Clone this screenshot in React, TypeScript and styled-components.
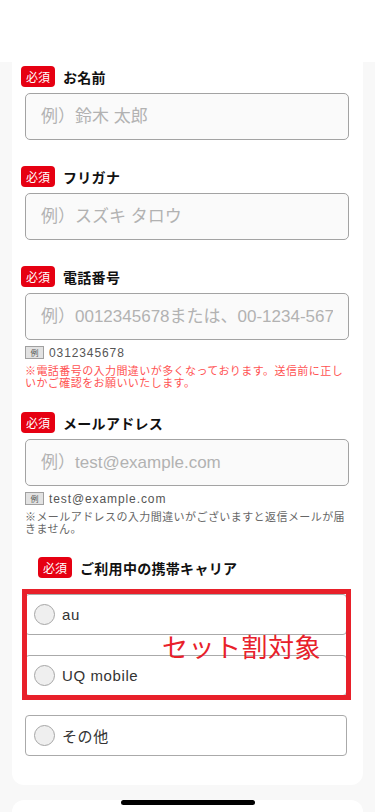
import React from 'react';
import styled, { createGlobalStyle } from 'styled-components';

const GlobalStyle = createGlobalStyle`
  html, body {
    margin: 0;
    padding: 0;
    background: #f8f8f8;
  }
  body {
    font-family: "Liberation Sans", "Noto Sans CJK JP", sans-serif;
    color: #111;
    -webkit-font-smoothing: antialiased;
  }
  * { box-sizing: border-box; }
`;

const Header = styled.div`
  height: 62px;
  background: #ffffff;
`;

const Body = styled.div`
  padding: 0 12px;
  display: flex;
  flex-direction: column;
  gap: 15px;
`;

const Card = styled.div`
  background: #ffffff;
  border-radius: 0 0 12px 12px;
  padding: 4px 14px 29px 13px;
  display: flex;
  flex-direction: column;
`;

const NextCard = styled.div`
  background: #ffffff;
  border-radius: 12px 12px 0 0;
  height: 60px;
`;

const Field = styled.div<{ $space?: number }>`
  display: flex;
  flex-direction: column;
  margin-top: ${(p) => p.$space ?? 0}px;
`;

const Head = styled.div<{ $indent?: number }>`
  display: flex;
  align-items: center;
  gap: 8px;
  height: 21px;
  margin-left: ${(p) => p.$indent ?? -4}px;
`;

const Required = styled.span`
  display: inline-block;
  height: 21px;
  padding: 0 5px;
  border-radius: 4px;
  background: #e60012;
  color: #ffffff;
  font-family: "Noto Sans CJK JP", sans-serif;
  font-size: 12px;
  line-height: 21px;
  font-weight: 400;
`;

const Label = styled.span`
  font-family: "Noto Sans CJK JP", sans-serif;
  font-size: 14px;
  font-weight: 700;
  letter-spacing: 0.3px;
  color: #111;
`;

const TextInput = styled.input`
  margin-top: 6px;
  width: 100%;
  height: 47px;
  padding: 0 15px;
  border: 1px solid #a3a3a3;
  border-radius: 5px;
  background: #fafafa;
  font-family: "Liberation Sans", "Noto Sans CJK JP", sans-serif;
  font-size: 17px;
  color: #333;
  outline: none;

  &::placeholder {
    color: #b2b2b2;
  }
`;

const ExampleRow = styled.div`
  display: flex;
  align-items: center;
  gap: 5px;
  margin-top: 6px;
  height: 13px;
`;

const ExampleTag = styled.span`
  width: 19px;
  height: 13px;
  border: 1px solid #a0a0a0;
  background: #e2e2e2;
  color: #555;
  font-family: "Noto Sans CJK JP", sans-serif;
  font-size: 8px;
  line-height: 11px;
  text-align: center;
`;

const ExampleText = styled.span`
  font-size: 12px;
  letter-spacing: 0.9px;
  color: #555;
`;

const Note = styled.p<{ $alert?: boolean }>`
  margin: 5px 0 0;
  font-family: "Noto Sans CJK JP", sans-serif;
  font-size: 11px;
  line-height: 12px;
  letter-spacing: 0.43px;
  color: ${(p) => (p.$alert ? '#ff5252' : '#666666')};
`;

const Options = styled.div`
  margin-top: 16px;
  margin-right: 2px;
  display: flex;
  flex-direction: column;
  gap: 19px;
`;

const Highlight = styled.div`
  position: relative;
  display: flex;
  flex-direction: column;
  gap: 20px;
`;

const HighlightFrame = styled.div`
  position: absolute;
  top: -5px;
  left: -3px;
  right: -4px;
  bottom: -4px;
  border: 5px solid #e8202a;
  pointer-events: none;
`;

const HighlightText = styled.span`
  position: absolute;
  top: 39px;
  right: 26px;
  font-family: "Noto Sans CJK JP", sans-serif;
  font-size: 26px;
  line-height: 26px;
  letter-spacing: 0.5px;
  color: #e8202a;
  pointer-events: none;
`;

const Option = styled.label`
  display: flex;
  align-items: center;
  gap: 7px;
  height: 41px;
  padding-left: 8px;
  border: 1px solid #aaaaaa;
  border-radius: 4px;
  background: #ffffff;
`;

const RadioCircle = styled.span`
  width: 21px;
  height: 21px;
  border-radius: 50%;
  border: 1px solid #a6a6a6;
  background: #efefef;
  flex-shrink: 0;
`;

const OptionText = styled.span`
  font-size: 15px;
  letter-spacing: 0.6px;
  color: #333;
`;

const HomeIndicator = styled.div`
  position: fixed;
  left: 50%;
  bottom: 7px;
  width: 134px;
  height: 5px;
  margin-left: -67px;
  border-radius: 3px;
  background: #000;
`;

const carriers = [
  { id: 'au', label: 'au' },
  { id: 'uq', label: 'UQ mobile' },
];

export default function App() {
  return (
    <>
      <GlobalStyle />
      <Header />
      <Body>
        <Card>
          <Field>
            <Head>
              <Required>必須</Required>
              <Label>お名前</Label>
            </Head>
            <TextInput placeholder="例）鈴木 太郎" />
          </Field>

          <Field $space={26}>
            <Head>
              <Required>必須</Required>
              <Label>フリガナ</Label>
            </Head>
            <TextInput placeholder="例）スズキ タロウ" />
          </Field>

          <Field $space={26}>
            <Head>
              <Required>必須</Required>
              <Label>電話番号</Label>
            </Head>
            <TextInput placeholder="例）0012345678または、00-1234-5678" />
            <ExampleRow>
              <ExampleTag>例</ExampleTag>
              <ExampleText>0312345678</ExampleText>
            </ExampleRow>
            <Note $alert>
              ※電話番号の入力間違いが多くなっております。送信前に正しいかご確認をお願いいたします。
            </Note>
          </Field>

          <Field $space={24}>
            <Head>
              <Required>必須</Required>
              <Label>メールアドレス</Label>
            </Head>
            <TextInput placeholder="例）test@example.com" />
            <ExampleRow>
              <ExampleTag>例</ExampleTag>
              <ExampleText>test@example.com</ExampleText>
            </ExampleRow>
            <Note>※メールアドレスの入力間違いがございますと返信メールが届きません。</Note>
          </Field>

          <Field $space={23}>
            <Head $indent={13}>
              <Required>必須</Required>
              <Label>ご利用中の携帯キャリア</Label>
            </Head>
            <Options>
              <Highlight>
                {carriers.map((c) => (
                  <Option key={c.id}>
                    <RadioCircle />
                    <OptionText>{c.label}</OptionText>
                  </Option>
                ))}
                <HighlightFrame />
                <HighlightText>セット割対象</HighlightText>
              </Highlight>
              <Option>
                <RadioCircle />
                <OptionText>その他</OptionText>
              </Option>
            </Options>
          </Field>
        </Card>
        <NextCard />
      </Body>
      <HomeIndicator />
    </>
  );
}
